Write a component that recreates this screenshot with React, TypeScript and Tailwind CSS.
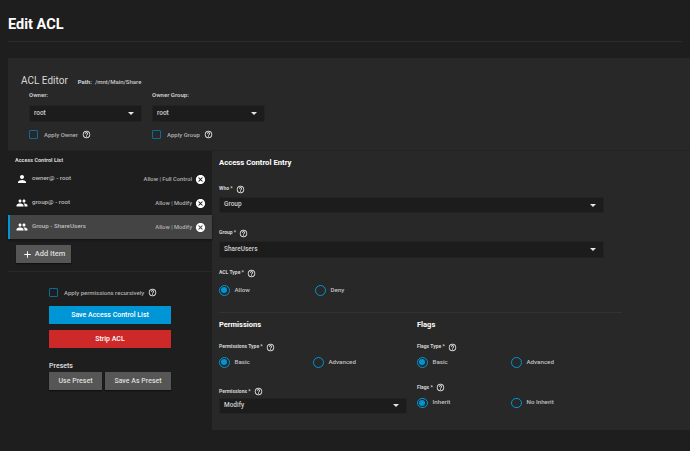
import type { ReactNode } from 'react';
import { MdAdd, MdCancel, MdHelpOutline, MdPeople, MdPerson } from 'react-icons/md';

function Help({ className = '' }: { className?: string }) {
  return <MdHelpOutline className={`text-[9px] text-white shrink-0 ${className}`} />;
}

function Caret() {
  return <div className="w-0 h-0 border-x-[3.5px] border-x-transparent border-t-[3.5px] border-t-[#e5e5e5]" />;
}

function Select({ value, className = '' }: { value: string; className?: string }) {
  return (
    <div className={`flex items-center justify-between bg-[#1c1c1c] border border-[#232323] pl-[4px] pr-[7px] text-[6.5px] font-medium text-[#d0d0d0] ${className}`}>
      <span>{value}</span>
      <Caret />
    </div>
  );
}

function Check({ label }: { label: string }) {
  return (
    <div className="flex items-center whitespace-nowrap">
      <div className="w-[9px] h-[9px] border border-[#0f6a9a] rounded-[1px] shrink-0" />
      <span className="ml-[6px] text-[6px] font-medium text-[#b0b0b0]">{label}</span>
      <Help className="ml-[4px]" />
    </div>
  );
}

function Label({ text }: { text: string }) {
  return (
    <div className="flex items-center h-[10px] text-[5px] font-bold text-[#d4d4d4]">
      <span>{text} *</span>
      <Help className="ml-[3px]" />
    </div>
  );
}

function Radio({ label, on, className = '' }: { label: string; on?: boolean; className?: string }) {
  return (
    <div className={`flex items-center ${className}`}>
      <div className="w-[10.5px] h-[10.5px] rounded-full border border-[#0095d5] flex items-center justify-center">
        {on && <div className="w-[6px] h-[6px] rounded-full bg-[#0095d5]" />}
      </div>
      <span className="ml-[5px] text-[6.2px] font-medium text-[#c0c0c0]">{label}</span>
    </div>
  );
}

function Row({ name, perm, group, active }: { name: string; perm: string; group?: boolean; active?: boolean }) {
  return (
    <div className={`flex items-center h-[24px] pr-[6px] ${active ? 'bg-[#444444] border-l-2 border-[#0095d5] pl-[6px] shadow-[0_1px_2px_#111]' : 'pl-[8px]'}`}>
      {group ? <MdPeople className="text-[12px] text-white" /> : <MdPerson className="text-[12px] text-white" />}
      <span className="ml-[4px] text-[6.2px] font-medium text-[#bcbcbc]">{name}</span>
      <span className="ml-auto text-[5.8px] font-medium text-[#b0b0b0]">{perm}</span>
      <MdCancel className="ml-[3px] text-[11px] text-white" />
    </div>
  );
}

function GrayButton({ children, className = '' }: { children: ReactNode; className?: string }) {
  return (
    <div className={`flex items-center justify-center h-[18px] bg-[#565656] text-[7px] font-medium text-[#dedede] shadow-[0_1px_1px_#111] ${className}`}>
      {children}
    </div>
  );
}

export default function App() {
  return (
    <div className="w-[690px] h-[451px] overflow-hidden bg-[#1e1e1e] font-['Roboto',sans-serif]">
      <div className="mx-[8px] h-[42px] border-b border-[#2c2c2c] pt-[14px]">
        <h1 className="text-[14.5px] leading-[22px] font-bold text-white">Edit ACL</h1>
      </div>

      <div className="ml-[8px] mt-[16px] h-[372px] bg-[#282828] flex flex-col">
        {/* header */}
        <div className="h-[93px] shrink-0 pl-[13px] pt-[15px] border-b border-[#222222]">
          <div className="flex items-baseline h-[17px]">
            <span className="text-[10px] text-[#d8d8d8]">ACL Editor</span>
            <span className="ml-[10px] text-[6px] font-bold text-[#c8d4dc]">Path:</span>
            <span className="ml-[3px] text-[6px] font-medium text-[#c8c8c8]">/mnt/Main/Share</span>
          </div>
          <div className="flex pl-[8px]">
            <div className="w-[123px]">
              <div className="text-[6px] font-bold leading-[10px] text-[#c4c4c4]">Owner:</div>
              <Select value="root" className="w-[113px] h-[17px] mt-[5px]" />
              <div className="mt-[8px]"><Check label="Apply Owner" /></div>
            </div>
            <div>
              <div className="text-[6px] font-bold leading-[10px] text-[#c4c4c4]">Owner Group:</div>
              <Select value="root" className="w-[113px] h-[17px] mt-[5px]" />
              <div className="mt-[8px]"><Check label="Apply Group" /></div>
            </div>
          </div>
        </div>

        <div className="flex flex-1 min-h-0">
          {/* left panel */}
          <div className="w-[204px] shrink-0 bg-[#1e1e1e] flex flex-col">
            <div className="pl-[7px] pt-[4px] h-[16px] text-[5.5px] font-bold leading-[10px] text-[#d8d8d8]">Access Control List</div>
            <Row name="owner@ - root" perm="Allow | Full Control" />
            <Row name="group@ - root" perm="Allow | Modify" group />
            <Row name="Group - ShareUsers" perm="Allow | Modify" group active />
            <div className="px-[8px] mt-[6px] pb-[8px] border-b border-[#282828]">
              <GrayButton className="w-[55px] gap-[2px]">
                <MdAdd className="text-[11px] text-white" />
                <span className="text-[7.5px]">Add Item</span>
              </GrayButton>
            </div>
            <div className="pl-[41px] pt-[16px] w-[163px]">
              <Check label="Apply permissions recursively" />
              <div className="mt-[9px] flex items-center justify-center h-[18px] bg-[#0095d5] text-[7px] font-medium text-white">Save Access Control List</div>
              <div className="mt-[6px] flex items-center justify-center h-[18px] bg-[#ce2929] text-[7px] font-medium text-white">Strip ACL</div>
              <div className="mt-[13px] text-[7px] leading-[10px] font-medium text-[#e0e0e0]">Presets</div>
              <div className="flex mt-[1px] gap-[3px]">
                <GrayButton className="w-[53px]">Use Preset</GrayButton>
                <GrayButton className="w-[66px]">Save As Preset</GrayButton>
              </div>
            </div>
          </div>

          {/* right panel */}
          <div className="flex-1 pl-[7px]">
            <div className="w-[403px] h-[162px] border-b border-[#323232]">
              <div className="pt-[6px] text-[7.7px] leading-[12px] font-bold text-white">Access Control Entry</div>
              <div className="w-[385px]">
                <div className="mt-[15px]"><Label text="Who" /></div>
                <Select value="Group" className="h-[16px] mt-[3px]" />
                <div className="mt-[15px]"><Label text="Group" /></div>
                <Select value="ShareUsers" className="h-[17px] mt-[3px]" />
                <div className="mt-[10px]"><Label text="ACL Type" /></div>
                <div className="flex mt-[7px]">
                  <Radio label="Allow" on className="w-[96px]" />
                  <Radio label="Deny" />
                </div>
              </div>
            </div>

            <div className="flex">
              <div className="w-[198px]">
                <div className="pt-[6px] text-[7.5px] leading-[12px] font-bold text-white">Permissions</div>
                <div className="mt-[11px]"><Label text="Permissions Type" /></div>
                <div className="flex mt-[5px]">
                  <Radio label="Basic" on className="w-[94px]" />
                  <Radio label="Advanced" />
                </div>
                <div className="mt-[19px]"><Label text="Permissions" /></div>
                <Select value="Modify" className="w-[188px] h-[16px] mt-[1px]" />
              </div>
              <div>
                <div className="pt-[6px] text-[7.5px] leading-[12px] font-bold text-white">Flags</div>
                <div className="mt-[11px]"><Label text="Flags Type" /></div>
                <div className="flex mt-[5px]">
                  <Radio label="Basic" on className="w-[94px]" />
                  <Radio label="Advanced" />
                </div>
                <div className="mt-[15px]"><Label text="Flags" /></div>
                <div className="flex mt-[5px]">
                  <Radio label="Inherit" on className="w-[94px]" />
                  <Radio label="No Inherit" />
                </div>
              </div>
            </div>
          </div>
        </div>
      </div>
    </div>
  );
}
